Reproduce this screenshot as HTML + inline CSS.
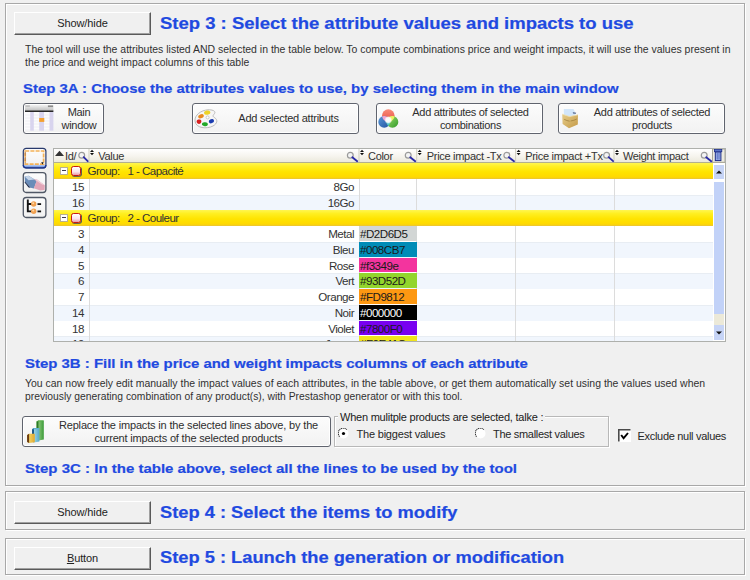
<!DOCTYPE html>
<html><head><meta charset="utf-8">
<style>
*{box-sizing:border-box;margin:0;padding:0}
html,body{width:750px;height:580px;overflow:hidden;background:#f0f0f0;font-family:"Liberation Sans",sans-serif;color:#000}
.a{position:absolute}
.grp{position:absolute;border:1px solid #a8a8a8;box-shadow:inset 1px 1px 0 #fff,1px 1px 0 #fff}
.btn{position:absolute;background:#f0f0f0;border-top:1px solid #fff;border-left:1px solid #fff;border-right:1px solid #5a5a5a;border-bottom:1px solid #5a5a5a;box-shadow:inset -1px -1px 0 #a0a0a0;font-size:11px;letter-spacing:-0.1px;text-align:center;color:#222}
.ttl{position:absolute;white-space:nowrap;color:#1f4ae0;font-weight:bold;transform-origin:0 0;-webkit-text-stroke:0.2px #1f4ae0}
.txt{position:absolute;white-space:nowrap;font-size:11.5px;color:#303030;transform-origin:0 0}
.rb{position:absolute;border:1px solid #60646e;border-radius:3px;background:linear-gradient(#fcfcfc,#f2f2f2);box-shadow:inset 0 0 0 1px #fff;font-size:11px;letter-spacing:-0.3px;color:#2e2e2e;text-align:center;line-height:13px}
.rb .lb{position:absolute;white-space:nowrap}
.ib{position:absolute;left:23px;width:23px;height:20px;border:1px solid #5a6070;border-radius:3px;background:linear-gradient(#fdfdfd,#eeeeee)}
.grid{position:absolute;left:53px;top:148px;width:673px;height:194px;border:1px solid #aeb0ac;background:#fff;overflow:hidden}
.hdr{position:absolute;left:0;top:0;width:671px;height:14px;background:linear-gradient(#ffffff,#f6f4ee 55%,#ebe9dc);border-bottom:1.4px solid #b2b08e}
.row{position:absolute;left:0;width:659px;height:15.75px;font-size:11.6px;letter-spacing:-0.5px;color:#1a1a1a}
.g{background:linear-gradient(#fff650 0%,#ffef22 22%,#ffe400 55%,#ffd900 88%,#e9c338 100%)}
.w{background:#fff}
.b{background:linear-gradient(#e8edf3 0,#e8edf3 1px,#f1f6fd 1px)}
.c{position:absolute;top:0;height:100%;white-space:nowrap;line-height:16px;color:#333}
.sep{position:absolute;top:15px;width:1px;height:180px;background:#dcdcdc}
.hc{position:absolute;top:0;height:14px;line-height:15px;font-size:11px;letter-spacing:-0.3px;color:#333;white-space:nowrap}
.hs{position:absolute;top:0;width:1px;height:14px;background:#d8d6c8}
.cc{position:absolute;left:305px;width:57.5px;top:0;height:14.75px;padding-left:1px;line-height:15.75px;color:#111}
.vs{position:absolute;top:0;width:1px;height:100%;background:#dcdcdc}
.idc{right:629px;text-align:right}
.vc{right:359px;text-align:right}
.mb{width:8px;height:8px;border:1px solid #b8b090;background:#fff}
.mb:after{content:"";position:absolute;left:1px;top:2.5px;width:4px;height:1.2px;background:#3c3c50}
.ri{width:10px;height:9.5px;border:1.5px solid #c81818;border-radius:2.5px;background:linear-gradient(#fff,#fbe4ea 60%,#e89aa8);box-shadow:0.8px 0.8px 0 #3a4060}
.lbl{font-size:11px;letter-spacing:-0.3px;color:#262626;line-height:13px;white-space:nowrap}
</style></head><body>

<!-- Group 1 -->
<div class="grp" style="left:5px;top:3px;width:740px;height:483px"></div>
<div class="btn" style="left:14px;top:12px;width:137px;height:23px;line-height:21px">Show/hide</div>
<div id="t1" class="ttl" style="left:160px;top:14px;font-size:16px;line-height:20px;transform:scaleX(1.1553)">Step 3 : Select the attribute values and impacts to use</div>
<div id="b1" class="txt" style="left:25px;top:43px;font-size:11.8px;line-height:13px;transform:scaleX(0.8865)">The tool will use the attributes listed AND selected in the table below. To compute combinations price and weight impacts, it will use the values present in</div>
<div id="b2" class="txt" style="left:25px;top:56px;font-size:11.8px;line-height:13px;transform:scaleX(0.8813)">the price and weight impact columns of this table</div>
<div id="t2" class="ttl" style="left:23px;top:80px;font-size:13.5px;line-height:18px;transform:scaleX(1.1036)">Step 3A : Choose the attributes values to use, by selecting them in the main window</div>
<div id="t3" class="ttl" style="left:25px;top:355px;font-size:13.5px;line-height:18px;transform:scaleX(1.1063)">Step 3B : Fill in the price and weight impacts columns of each attribute</div>
<div id="b3" class="txt" style="left:25px;top:377px;font-size:11.8px;line-height:13px;transform:scaleX(0.8869)">You can now freely edit manually the impact values of each attributes, in the table above, or get them automatically set using the values used when</div>
<div id="b4" class="txt" style="left:25px;top:390px;font-size:11.8px;line-height:13px;transform:scaleX(0.8743)">previously generating combination of any product(s), with Prestashop generator or with this tool.</div>
<div id="t4" class="ttl" style="left:25px;top:460px;font-size:13.5px;line-height:18px;transform:scaleX(1.1116)">Step 3C : In the table above, select all the lines to be used by the tool</div>
<div id="t5" class="ttl" style="left:160px;top:503px;font-size:16px;line-height:20px;transform:scaleX(1.1419)">Step 4 : Select the items to modify</div>
<div id="t6" class="ttl" style="left:160px;top:548px;font-size:16px;line-height:20px;transform:scaleX(1.1422)">Step 5 : Launch the generation or modification</div>

<!-- action buttons -->
<div class="rb" style="left:22.5px;top:102.5px;width:81px;height:31px">
  <svg class="a" style="left:1.6px;top:1.6px" width="29" height="26" viewBox="25.1 105.1 29 26">
    <defs><linearGradient id="mh" x1="0" y1="0" x2="0" y2="1"><stop offset="0" stop-color="#f2f2f2"/><stop offset="1" stop-color="#c0c0c0"/></linearGradient></defs>
    <rect x="25.1" y="112" width="28.4" height="18.8" fill="#fbfbfd"/>
    <rect x="25.1" y="114.8" width="28.4" height="0.6" fill="#e6e6ee"/><rect x="25.1" y="117.8" width="28.4" height="0.6" fill="#e6e6ee"/><rect x="25.1" y="120.8" width="28.4" height="0.6" fill="#e6e6ee"/><rect x="25.1" y="123.8" width="28.4" height="0.6" fill="#e6e6ee"/><rect x="25.1" y="126.8" width="28.4" height="0.6" fill="#e6e6ee"/><rect x="25.1" y="129.8" width="28.4" height="0.6" fill="#e6e6ee"/>
    <rect x="30.3" y="112" width="3.6" height="18.8" fill="#d8d4ee"/>
    <rect x="39.3" y="112" width="4.8" height="18.8" fill="#d8d4ee"/>
    <rect x="49.6" y="112" width="3.9" height="18.8" fill="#d8d4ee"/>
    <rect x="25.1" y="105.1" width="28.4" height="5.5" fill="url(#mh)"/>
    <rect x="48" y="105.5" width="5.2" height="1.7" fill="#8c8c8c"/>
    <rect x="25.5" y="105.5" width="4.5" height="1.3" fill="#b4b4b4"/>
    <rect x="25.1" y="110.6" width="28.4" height="1.4" fill="#111"/>
    <rect x="39.3" y="118.1" width="5.1" height="3.9" fill="#f4a030"/>
  </svg>
  <div class="lb" style="left:32px;width:47px;top:2px;text-align:center">Main<br>window</div>
</div>
<div class="rb" style="left:192px;top:102.5px;width:167px;height:31px">
  <svg class="a" style="left:1px;top:5px" width="25" height="21" viewBox="-1 0 25 21">
    <path d="M0 12 C-0.5 6 6 1.2 13 0.8 C18.5 0.6 21 2.6 19.5 4.6 C18.3 6.2 17 7 19.5 8.6 C23 10.8 22.5 14.5 18 17 C12 20.2 0.6 19.5 0 12 Z" fill="#f6f6f6" stroke="#b4b4b4" stroke-width="0.9"/>
    <ellipse cx="12.2" cy="3.6" rx="3.2" ry="2.1" fill="#ecd428" transform="rotate(-12 12.2 3.6)"/>
    <ellipse cx="6" cy="7.2" rx="2.9" ry="2" fill="#e88a20" transform="rotate(-25 6 7.2)"/>
    <path d="M1.6 12.5 C1.6 10.6 3.8 10.2 5.6 10.8 C6.8 11.4 6.6 13.6 5.4 14.6 C3.8 15.6 1.6 14.6 1.6 12.5 Z" fill="#d82020"/>
    <ellipse cx="9.9" cy="15.2" rx="3" ry="2" fill="#22a828" transform="rotate(8 9.9 15.2)"/>
    <ellipse cx="16.4" cy="12.2" rx="2.7" ry="2" fill="#1a3cb0" transform="rotate(-20 16.4 12.2)"/>
    <circle cx="12.6" cy="8.4" r="1.5" fill="#fff" stroke="#b8b8b8" stroke-width="0.7"/>
  </svg>
  <div class="lb" style="left:0;width:165px;top:8px;padding-left:26px;letter-spacing:-0.25px;text-align:center">Add selected attributs</div>
</div>
<div class="rb" style="left:376px;top:102.5px;width:167px;height:31px">
  <svg class="a" style="left:1px;top:5px" width="22" height="22" viewBox="0 0 22 22">
    <defs>
      <clipPath id="cR"><circle cx="10.3" cy="6.6" r="6.3" fill="#000"/></clipPath>
      <clipPath id="cB"><circle cx="6.2" cy="12.9" r="5.9" fill="#000"/></clipPath>
      <linearGradient id="gR" x1="0" y1="0" x2="0" y2="1"><stop offset="0" stop-color="#f88a78"/><stop offset="1" stop-color="#e85040"/></linearGradient>
      <linearGradient id="gB" x1="0" y1="0" x2="1" y2="1"><stop offset="0" stop-color="#5a9ad8"/><stop offset="1" stop-color="#2050a0"/></linearGradient>
      <linearGradient id="gG" x1="0" y1="0" x2="1" y2="1"><stop offset="0" stop-color="#a0e070"/><stop offset="1" stop-color="#309828"/></linearGradient>
      <radialGradient id="gW"><stop offset="0" stop-color="#fff" stop-opacity="1"/><stop offset="0.6" stop-color="#fff" stop-opacity="0.9"/><stop offset="1" stop-color="#fff" stop-opacity="0"/></radialGradient>
    </defs>
    <circle cx="10.3" cy="6.6" r="6.3" fill="url(#gR)"/>
    <circle cx="6.2" cy="12.9" r="5.9" fill="url(#gB)"/>
    <circle cx="14.4" cy="12.9" r="5.9" fill="url(#gG)"/>
    <g clip-path="url(#cR)"><circle cx="6.2" cy="12.9" r="5.9" fill="#f2a8d0"/><circle cx="14.4" cy="12.9" r="5.9" fill="#f0f060"/></g>
    <g clip-path="url(#cB)"><circle cx="14.4" cy="12.9" r="5.9" fill="#50c0d0"/></g>
    <circle cx="10.3" cy="11" r="4" fill="url(#gW)"/>
  </svg>
  <div class="lb" style="left:0;width:165px;top:2px;padding-left:22px;text-align:center">Add attributes of selected<br>combinations</div>
</div>
<div class="rb" style="left:558px;top:102.5px;width:167px;height:31px">
  <svg class="a" style="left:3px;top:5px" width="18" height="21" viewBox="0 0 18 21">
    <defs><linearGradient id="gBx" x1="0" y1="0" x2="1" y2="1"><stop offset="0" stop-color="#e6cc88"/><stop offset="1" stop-color="#c49a48"/></linearGradient></defs>
    <path d="M1.8 0 L11.5 0 L13 3.2 L13.6 7.5 L1.8 7.5 Z" fill="#d2e6fa"/>
    <path d="M10.8 3.2 L14.2 3.8 L13.8 4.8 L11 4.4 Z" fill="#4a5a80"/>
    <path d="M0.2 5.2 L7.5 7.6 L16 5.8 L15.8 15.6 L7 19.2 L0.6 15 Z" fill="url(#gBx)"/>
    <path d="M0.2 5.2 L7.5 7.6 L16 5.8" stroke="#f0e0b0" stroke-width="0.8" fill="none"/>
    <path d="M2.2 10.4 Q5 11.8 7.6 12.2 M8.6 12 Q12 11.6 14.8 10" stroke="#9a7a38" stroke-width="0.9" fill="none" opacity="0.8"/>
  </svg>
  <div class="lb" style="left:0;width:165px;top:2px;padding-left:21px;text-align:center">Add attributes of selected<br>products</div>
</div>

<!-- left icon buttons -->
<svg class="a" style="left:22px;top:147px" width="25" height="72" viewBox="0 0 25 72">
  <defs>
    <linearGradient id="ibg" x1="0" y1="0" x2="0" y2="1"><stop offset="0" stop-color="#fdfdfd"/><stop offset="1" stop-color="#f0f0f0"/></linearGradient>
    <linearGradient id="ibb" x1="0" y1="0" x2="0" y2="1"><stop offset="0" stop-color="#c8daf8"/><stop offset="1" stop-color="#4a78d8"/></linearGradient>
  </defs>
  <!-- button 1 -->
  <rect x="1.3" y="1.3" width="22.6" height="19.6" rx="3" fill="url(#ibg)" stroke="#283a6c" stroke-width="1.2"/>
  <path d="M2 17.6 H23.2 V18.6 Q23.2 20.3 21.3 20.3 H3.9 Q2 20.3 2 18.6 Z" fill="url(#ibb)" opacity="0.85"/>
  <path d="M1.3 18 Q1.3 20.9 4.3 20.9 H20.9 Q23.9 20.9 23.9 18" stroke="#1a3490" stroke-width="1.3" fill="none"/>
  <rect x="3.2" y="4" width="18.4" height="13.2" fill="none" stroke="#f4b258" stroke-width="1.7" stroke-dasharray="4 1.2"/>
  <path d="M3.2 4.8 V16.6" stroke="#b88050" stroke-width="1.2" stroke-dasharray="4 1.2"/>
  <path d="M19.2 15.2 L21.6 15.2 L20.4 17.6 Z" fill="#111"/>
  <!-- button 2 -->
  <rect x="1.3" y="25.7" width="22.6" height="19.8" rx="3" fill="url(#ibg)" stroke="#505866" stroke-width="1.3"/>
  <path d="M2.6 29.6 L6.5 28.8 L14.8 33.8 L12 41.6 L8.6 40.8 L3 34.4 Z" fill="#6a8cb8"/>
  <path d="M2.6 29.6 L6.5 28.8 L12.5 32.4 L6.5 33.2 Z" fill="#c4d4e8"/>
  <path d="M3 34.4 L8.6 40.8 L6.6 40.4 L2.6 35.6 Z" fill="#1c2c50"/>
  <path d="M11.6 32.4 L15 32.6 L22.8 38.2 L22.6 43 L18.2 43.4 L11.8 41.2 L14.6 33.9 Z" fill="#e2a6b8"/>
  <path d="M15 32.6 L22.8 38.2 L20 37.6 L13.8 33.2 Z" fill="#f0d0da"/>
  <!-- button 3 -->
  <rect x="1.3" y="50.5" width="22.6" height="20" rx="3" fill="url(#ibg)" stroke="#505866" stroke-width="1.3"/>
  <path d="M5.8 52.6 V64.4 H10 M5.8 57 H10" stroke="#151515" stroke-width="1.9" fill="none"/>
  <circle cx="11.7" cy="57" r="2.7" fill="#f0a050"/>
  <circle cx="11.7" cy="64.3" r="2.7" fill="#f0a050"/>
  <circle cx="11.2" cy="56.3" r="1" fill="#fbd8a8"/>
  <circle cx="11.2" cy="63.6" r="1" fill="#fbd8a8"/>
  <rect x="15.5" y="56.2" width="3.6" height="1.8" fill="#151515"/>
  <rect x="15.5" y="63.5" width="3.6" height="1.8" fill="#151515"/>
</svg>

<!-- grid -->
<div class="grid">
  <div class="hdr"><svg class="a" style="left:0;top:0" width="671" height="14" viewBox="0 0 671 14">
<path d="M1 7 L5.5 1.8000000000000114 L10 7 Z" fill="#333"/>
<rect x="34.50" y="0" width="1" height="13" fill="#d0cec0"/>
<rect x="304.50" y="0" width="1" height="13" fill="#d0cec0"/>
<rect x="362.20" y="0" width="1" height="13" fill="#d0cec0"/>
<rect x="461.10" y="0" width="1" height="13" fill="#d0cec0"/>
<rect x="559.50" y="0" width="1" height="13" fill="#d0cec0"/>
<rect x="658.50" y="0" width="1" height="13" fill="#d0cec0"/>
<path d="M36.00 3 L38.00 0.6999999999999886 L40.00 3 Z M36.00 4 L38.00 6.300000000000011 L40.00 4 Z" fill="#111"/>
<path d="M306.00 3 L308.00 0.6999999999999886 L310.00 3 Z M306.00 4 L308.00 6.300000000000011 L310.00 4 Z" fill="#111"/>
<path d="M363.70 3 L365.70 0.6999999999999886 L367.70 3 Z M363.70 4 L365.70 6.300000000000011 L367.70 4 Z" fill="#111"/>
<path d="M462.60 3 L464.60 0.6999999999999886 L466.60 3 Z M462.60 4 L464.60 6.300000000000011 L466.60 4 Z" fill="#111"/>
<path d="M561.00 3 L563.00 0.6999999999999886 L565.00 3 Z M561.00 4 L563.00 6.300000000000011 L565.00 4 Z" fill="#111"/>
<circle cx="27.70" cy="6.20" r="2.9" fill="#f4f4f4" stroke="#9a9a9a" stroke-width="1.2"/>
<path d="M29.70 8.20 L33.70 12.20" stroke="#2a2aa8" stroke-width="1.8" stroke-linecap="round"/>
<circle cx="296.30" cy="6.20" r="2.9" fill="#f4f4f4" stroke="#9a9a9a" stroke-width="1.2"/>
<path d="M298.30 8.20 L303.20 12.20" stroke="#2a2aa8" stroke-width="1.8" stroke-linecap="round"/>
<circle cx="354.20" cy="6.20" r="2.9" fill="#f4f4f4" stroke="#9a9a9a" stroke-width="1.2"/>
<path d="M356.20 8.20 L361.20 12.20" stroke="#2a2aa8" stroke-width="1.8" stroke-linecap="round"/>
<circle cx="452.80" cy="6.20" r="2.9" fill="#f4f4f4" stroke="#9a9a9a" stroke-width="1.2"/>
<path d="M454.80 8.20 L460.00 12.20" stroke="#2a2aa8" stroke-width="1.8" stroke-linecap="round"/>
<circle cx="552.60" cy="6.20" r="2.9" fill="#f4f4f4" stroke="#9a9a9a" stroke-width="1.2"/>
<path d="M554.60 8.20 L559.10 12.20" stroke="#2a2aa8" stroke-width="1.8" stroke-linecap="round"/>
<circle cx="650.20" cy="6.20" r="2.9" fill="#f4f4f4" stroke="#9a9a9a" stroke-width="1.2"/>
<path d="M652.20 8.20 L657.20 12.20" stroke="#2a2aa8" stroke-width="1.8" stroke-linecap="round"/>
<rect x="658.50" y="0" width="12.5" height="13.3" fill="#ecebe0" stroke="#a8a69a" stroke-width="1"/>
<rect x="661.30" y="3" width="5.6" height="8.6" fill="#a8bcf0" stroke="#1a2a88" stroke-width="1"/>
<path d="M663.20 4 V10.6 M665.00 4 V10.6" stroke="#3a50b0" stroke-width="0.8"/>
<rect x="660.50" y="0.3" width="7.3" height="2.4" fill="#5a74c8" stroke="#1a2a88" stroke-width="0.8"/>
</svg>
<div class="hc" style="left:11.00px">Id/</div>
<div class="hc" style="left:44.30px">Value</div>
<div class="hc" style="left:314.00px">Color</div>
<div class="hc" style="left:372.80px">Price impact -Tx</div>
<div class="hc" style="left:471.20px">Price impact +Tx</div>
<div class="hc" style="left:568.90px">Weight impact</div>
</div>
<div class="row g" style="top:14.00px"><div class="a mb" style="left:6px;top:3.5px"></div><div class="a ri" style="left:17px;top:3px"></div><div class="c" style="left:33.6px;white-space:pre;letter-spacing:-0.57px">Group:   1 - Capacité</div></div>
<div class="row w" style="top:29.75px"><div class="vs" style="left:34.5px"></div><div class="vs" style="left:304.5px"></div><div class="vs" style="left:362px"></div><div class="vs" style="left:461px"></div><div class="vs" style="left:559.5px"></div><div class="c idc">15</div><div class="c vc">8Go</div></div>
<div class="row b" style="top:45.50px"><div class="vs" style="left:34.5px"></div><div class="vs" style="left:304.5px"></div><div class="vs" style="left:362px"></div><div class="vs" style="left:461px"></div><div class="vs" style="left:559.5px"></div><div class="c idc">16</div><div class="c vc">16Go</div></div>
<div class="row g" style="top:61.25px"><div class="a mb" style="left:6px;top:3.5px"></div><div class="a ri" style="left:17px;top:3px"></div><div class="c" style="left:33.6px;white-space:pre;letter-spacing:-0.57px">Group:   2 - Couleur</div></div>
<div class="row w" style="top:77.00px"><div class="vs" style="left:34.5px"></div><div class="vs" style="left:304.5px"></div><div class="vs" style="left:362px"></div><div class="vs" style="left:461px"></div><div class="vs" style="left:559.5px"></div><div class="c idc">3</div><div class="c vc">Metal</div><div class="cc" style="background:#D2D6D5;color:#1a1a1a">#D2D6D5</div></div>
<div class="row b" style="top:92.75px"><div class="vs" style="left:34.5px"></div><div class="vs" style="left:304.5px"></div><div class="vs" style="left:362px"></div><div class="vs" style="left:461px"></div><div class="vs" style="left:559.5px"></div><div class="c idc">4</div><div class="c vc">Bleu</div><div class="cc" style="background:#008CB7;color:#1a1a1a">#008CB7</div></div>
<div class="row w" style="top:108.50px"><div class="vs" style="left:34.5px"></div><div class="vs" style="left:304.5px"></div><div class="vs" style="left:362px"></div><div class="vs" style="left:461px"></div><div class="vs" style="left:559.5px"></div><div class="c idc">5</div><div class="c vc">Rose</div><div class="cc" style="background:#f3349e;color:#1a1a1a">#f3349e</div></div>
<div class="row b" style="top:124.25px"><div class="vs" style="left:34.5px"></div><div class="vs" style="left:304.5px"></div><div class="vs" style="left:362px"></div><div class="vs" style="left:461px"></div><div class="vs" style="left:559.5px"></div><div class="c idc">6</div><div class="c vc">Vert</div><div class="cc" style="background:#93D52D;color:#1a1a1a">#93D52D</div></div>
<div class="row w" style="top:140.00px"><div class="vs" style="left:34.5px"></div><div class="vs" style="left:304.5px"></div><div class="vs" style="left:362px"></div><div class="vs" style="left:461px"></div><div class="vs" style="left:559.5px"></div><div class="c idc">7</div><div class="c vc">Orange</div><div class="cc" style="background:#FD9812;color:#1a1a1a">#FD9812</div></div>
<div class="row b" style="top:155.75px"><div class="vs" style="left:34.5px"></div><div class="vs" style="left:304.5px"></div><div class="vs" style="left:362px"></div><div class="vs" style="left:461px"></div><div class="vs" style="left:559.5px"></div><div class="c idc">14</div><div class="c vc">Noir</div><div class="cc" style="background:#000000;color:#fff">#000000</div></div>
<div class="row w" style="top:171.50px"><div class="vs" style="left:34.5px"></div><div class="vs" style="left:304.5px"></div><div class="vs" style="left:362px"></div><div class="vs" style="left:461px"></div><div class="vs" style="left:559.5px"></div><div class="c idc">18</div><div class="c vc">Violet</div><div class="cc" style="background:#7800F0;color:#1a1a1a">#7800F0</div></div>
<div class="row b" style="top:187.25px"><div class="vs" style="left:34.5px"></div><div class="vs" style="left:304.5px"></div><div class="vs" style="left:362px"></div><div class="vs" style="left:461px"></div><div class="vs" style="left:559.5px"></div><div class="c idc">19</div><div class="c vc">Jaune</div><div class="cc" style="background:#F0E41C;color:#1a1a1a">#F0E41C</div></div>

<div class="a" style="left:659px;top:14px;width:12px;height:179px;background:#fff">
  <div class="a" style="left:1px;top:1.5px;width:10px;height:14.5px;background:#c6d4f6"></div>
  <svg class="a" style="left:3px;top:7px" width="6" height="4"><path d="M0 3.5 L3 0.5 L6 3.5 Z" fill="#111"/></svg>
  <div class="a" style="left:1px;top:18.5px;width:10px;height:132px;background:#c2d2f8"></div>
  <div class="a" style="left:1px;top:150.5px;width:10px;height:11px;background:#ece9d8"></div>
  <div class="a" style="left:1px;top:161.5px;width:10px;height:15px;background:#c6d4f6"></div>
  <svg class="a" style="left:3px;top:167.5px" width="6" height="4"><path d="M0 0.5 L3 3.5 L6 0.5 Z" fill="#111"/></svg>
</div>

</div>

<!-- Step 3B -->

<div class="rb" style="left:21.5px;top:415.5px;width:309px;height:31px">
  <svg class="a" style="left:3px;top:3px" width="20" height="25" viewBox="0 0 20 25">
    <defs>
      <linearGradient id="bY" x1="0" y1="0" x2="1" y2="0"><stop offset="0" stop-color="#f8e070"/><stop offset="1" stop-color="#e0a830"/></linearGradient>
      <linearGradient id="bB" x1="0" y1="0" x2="1" y2="0"><stop offset="0" stop-color="#b0e4f0"/><stop offset="1" stop-color="#58a8c8"/></linearGradient>
      <linearGradient id="bG" x1="0" y1="0" x2="1" y2="0"><stop offset="0" stop-color="#a8d890"/><stop offset="1" stop-color="#3a9a38"/></linearGradient>
    </defs>
    <path d="M10.5 1.6 L12.5 0.4 L17.8 0.4 L17.8 19.6 L12.5 20.6 L10.5 19.4 Z" fill="url(#bG)"/>
    <path d="M10.5 1.6 L12.5 0.4 L12.5 20.6 L10.5 19.4 Z" fill="#2a7a28"/>
    <path d="M10.5 1.6 L12.5 0.4 L17.8 0.4 L16 1.6 Z" fill="#58b048"/>
    <path d="M6 9.2 L8 8 L13.4 8 L13.4 21.4 L8 22.4 L6 21.2 Z" fill="url(#bB)"/>
    <path d="M6 9.2 L8 8 L8 22.4 L6 21.2 Z" fill="#1e5a88"/>
    <path d="M6 9.2 L8 8 L13.4 8 L11.6 9.2 Z" fill="#60b0d0"/>
    <path d="M1.1 15 L3.1 13.8 L8.8 13.8 L8.8 22.2 L3.1 23 L1.1 22 Z" fill="url(#bY)"/>
    <path d="M1.1 15 L3.1 13.8 L3.1 23 L1.1 22 Z" fill="#6a3a10"/>
  </svg>
  <div class="lb" style="left:0;width:307px;top:2px;padding-left:25px;letter-spacing:-0.17px;text-align:center">Replace the impacts in the selected lines above, by the<br>current impacts of the selected products</div>
</div>

<!-- radio group -->
<div class="a" style="left:334px;top:416px;width:275px;height:31px;border:1px solid #b8b8b8;box-shadow:inset 1px 1px 0 #fff,1px 1px 0 #fff"></div>
<div class="a" style="left:338px;top:411px;padding:0 2px;background:#f0f0f0;font-size:11px;letter-spacing:-0.23px;color:#1a1a1a;line-height:13px;white-space:nowrap">When mulitple products are selected, talke :</div>
<svg class="a" style="left:337.8px;top:427.6px" width="11" height="11" viewBox="0 0 11 11"><circle cx="5.5" cy="5.5" r="5" fill="#fff"/><path d="M1.6 8.6 A4.6 4.6 0 0 1 8.8 1.7" stroke="#303030" stroke-width="1.1" fill="none" stroke-dasharray="1.2 0.6"/><circle cx="5.5" cy="5.5" r="1.6" fill="#000"/></svg>
<div class="a lbl" style="left:356.5px;top:428px;letter-spacing:-0.2px">The biggest values</div>
<svg class="a" style="left:474.5px;top:427.6px" width="11" height="11" viewBox="0 0 11 11"><circle cx="5.5" cy="5.5" r="5" fill="#fff"/><path d="M1.6 8.6 A4.6 4.6 0 0 1 8.8 1.7" stroke="#303030" stroke-width="1.1" fill="none" stroke-dasharray="1.2 0.6"/></svg>
<div class="a lbl" style="left:493px;top:428px">The smallest values</div>
<svg class="a" style="left:618px;top:429px" width="13" height="13" viewBox="0 0 13 13"><rect x="0" y="0" width="13" height="13" fill="#fff"/><path d="M0.8 12.5 V0.8 H12.5" stroke="#4a4a4a" stroke-width="1.6" fill="none"/><path d="M3.2 6 L5.6 9.2 L10 4" stroke="#000" stroke-width="1.9" fill="none"/></svg>
<div class="a lbl" style="left:637.5px;top:430px">Exclude null values</div>


<!-- Group 2 -->
<div class="grp" style="left:5px;top:491px;width:740px;height:39px"></div>
<div class="btn" style="left:14px;top:501px;width:137px;height:23px;line-height:21px">Show/hide</div>

<!-- Group 3 -->
<div class="grp" style="left:5px;top:538px;width:740px;height:37px"></div>
<div class="btn" style="left:14px;top:547px;width:137px;height:23px;line-height:21px"><u>B</u>utton</div>

</body></html>
